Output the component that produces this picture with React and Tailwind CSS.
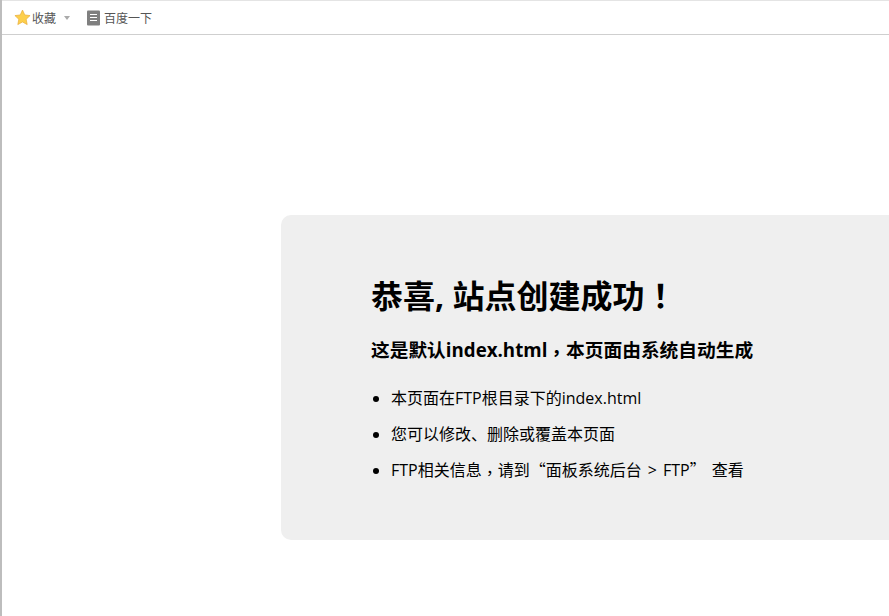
function App() {
  return (
    <div className="h-[616px] w-[889px] overflow-hidden bg-white border-l-2 border-[#bdbdbd] font-['Open_Sans','Noto_Sans_CJK_SC',sans-serif]">
      <div className="h-[35px] border-t border-t-[#e4e4e4] border-b border-b-[#cfcfcf] flex items-center pl-[12px] text-[12px] text-[#555] font-['Noto_Sans_CJK_SC',sans-serif]">
        <svg width="17" height="17" viewBox="0 0 24 24" className="shrink-0">
          <path
            d="M12 1.5l3.2 6.9 7.5.9-5.5 5.2 1.4 7.5-6.6-3.7-6.6 3.7 1.4-7.5L1.3 9.3l7.5-.9z"
            fill="#fdcf4b"
            stroke="#e8ad3a"
            strokeWidth="1"
          />
        </svg>
        <span className="ml-[1px]">收藏</span>
        <span className="ml-[8px] mt-[1px] w-0 h-0 border-x-[3px] border-x-transparent border-t-[4px] border-t-[#aaa]"></span>
        <svg width="14" height="16" viewBox="0 0 14 16" className="ml-[17px] shrink-0">
          <rect x="0" y="0.5" width="13" height="15" rx="1" fill="#7f7f7f" />
          <path d="M3 4.5h7M3 7.5h7M3 10.5h7" stroke="#fff" strokeWidth="1.2" />
        </svg>
        <span className="ml-[3px]">百度一下</span>
      </div>
      <div className="mt-[180px] ml-[279px] w-[640px] h-[325px] bg-[#efefef] rounded-[10px] pl-[90px] pt-[59px] text-black">
        <h1 className="text-[32px] leading-[44px] font-bold">
          恭喜, 站点创建成功<span className="leading-[0] font-['Noto_Sans_CJK_TC',sans-serif]">！</span>
        </h1>
        <h3 className="mt-[19px] text-[18.72px] leading-[26px] font-bold">
          这是默认<span>index.html</span>
          <span className="leading-[0] align-[-3px] font-['Noto_Sans_CJK_TC',sans-serif]">，</span>本页面由系统自动生成
        </h3>
        <ul className="mt-[24px] list-disc pl-[20px] text-[16px] leading-[22px]">
          <li>本页面在FTP根目录下的index.html</li>
          <li className="mt-[14px]">您可以修改、删除或覆盖本页面</li>
          <li className="mt-[14px]">
            FTP相关信息<span className="leading-[0] align-[-3px] font-['Noto_Sans_CJK_TC',sans-serif]">，</span>请到
            <span className="leading-[0] font-['Noto_Sans_CJK_SC',sans-serif]">“</span>面板系统后台
            <span className="mx-[6px]">&gt;</span>FTP
            <span className="leading-[0] font-['Noto_Sans_CJK_SC',sans-serif]">”</span>
            <span className="ml-[6px]">查看</span>
          </li>
        </ul>
      </div>
    </div>
  );
}

export default App;
